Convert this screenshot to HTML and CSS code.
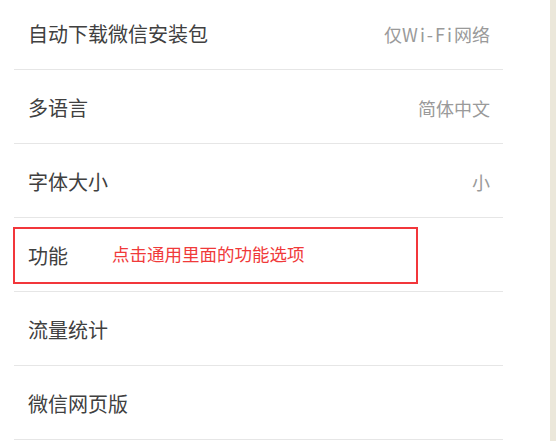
FILE: index.html
```html
<!DOCTYPE html>
<html lang="zh">
<head>
<meta charset="utf-8">
<link rel="stylesheet" href="styles.css">
</head>
<body>
<div class="page">
  <ul class="list">
    <li class="row first"><span class="label">自动下载微信安装包</span><span class="value">仅<span class="latin">Wi-Fi</span>网络</span></li>
    <li class="row"><span class="label">多语言</span><span class="value">简体中文</span></li>
    <li class="row"><span class="label">字体大小</span><span class="value">小</span></li>
    <li class="row marked"><span class="label">功能</span><span class="note">点击通用里面的功能选项</span></li>
    <li class="row"><span class="label">流量统计</span></li>
    <li class="row"><span class="label">微信网页版</span></li>
  </ul>
</div>
</body>
</html>
```

FILE: styles.css
```css
html, body {
  margin: 0;
  padding: 0;
  background: #ebe7da;
  height: 441px;
  overflow: hidden;
}
.page {
  width: 550px;
  height: 441px;
  background: #ffffff;
  font-family: "Noto Sans CJK SC", "Noto Sans", sans-serif;
  overflow: hidden;
}
.list {
  list-style: none;
  margin: -4px 0 0 14px;
  padding: 0;
  width: 489px;
}
.row {
  position: relative;
  display: flex;
  align-items: center;
  height: 74px;
  padding: 2px 13px 0 14px;
  box-sizing: border-box;
  border-bottom: 1px solid #e6e6e6;
}
.label {
  font-size: 20px;
  color: #404040;
  flex: 1;
}
.value {
  font-size: 18px;
  color: #9a9a9a;
}
.latin {
  letter-spacing: 2px;
}
.note {
  position: absolute;
  left: 98px;
  top: 23px;
  font-size: 17.5px;
  color: #f03a3a;
}
.marked::after {
  content: "";
  position: absolute;
  left: -1px;
  top: 9px;
  width: 405px;
  height: 57px;
  border: 2px solid #f2363b;
  box-sizing: border-box;
}
```
